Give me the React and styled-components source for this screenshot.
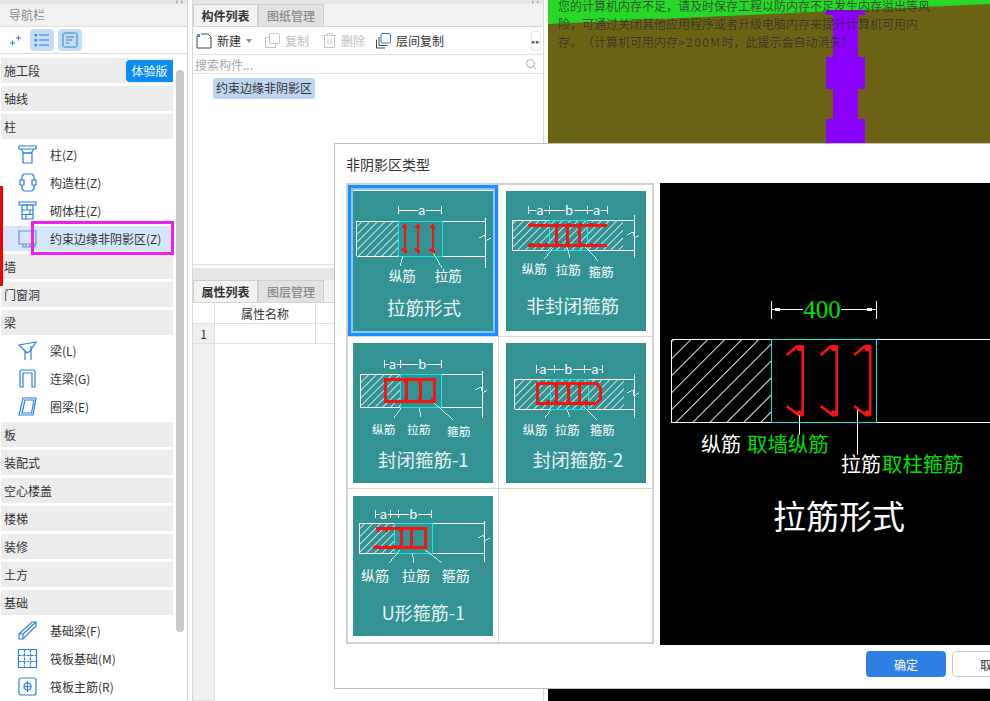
import React from 'react'
import styled, { createGlobalStyle } from 'styled-components'
import { Search } from 'lucide-react'

const FONT = '"Noto Sans CJK SC", "Noto Sans", sans-serif'
const BLUE = '#2a7de1'

const Global = createGlobalStyle`
html, body { margin:0; padding:0; background:#fff; }
* { box-sizing:border-box; }
`

const Page = styled.div`
position:relative;
width:990px;
height:701px;
overflow:hidden;
display:flex;
background:#fff;
font-family:${FONT};
font-size:12px;
color:#333;
text-spacing-trim:space-all;
`

/* ---------- left nav ---------- */
const Sidebar = styled.div`
position:relative;
width:188px;
flex:none;
margin-right:4px;
border-right:1px solid #d8d8d8;
display:flex;
flex-direction:column;
`
const RedMark = styled.div`
position:absolute;
left:0;
top:186px;
width:3px;
height:100px;
background:#f00000;
`
const TopStrip = styled.div`
height:4px;
background:#e6e6e6;
flex:none;
display:flex;
justify-content:flex-end;
padding-right:3px;
`
const NavTitle = styled.div`
height:22px;
line-height:21px;
padding-left:9px;
background:#f1f1f1;
color:#8a8a8a;
flex:none;
`
const NavTools = styled.div`
height:28px;
flex:none;
display:flex;
align-items:center;
gap:4px;
padding-left:4px;
border-top:1px solid #e0e0e0;
border-bottom:1px solid #dcdcdc;
`
const ToolSlot = styled.div`
height:22px;
display:flex;
align-items:center;
justify-content:center;
border-radius:4px;
background:${p => (p.$on ? '#c5dcf3' : 'transparent')};
width:${p => (p.$on ? '24px' : '22px')};
`
const NavBody = styled.div`
flex:1;
display:flex;
min-height:0;
`
const NavList = styled.div`
width:174px;
padding:4px 1px 0 1px;
display:flex;
flex-direction:column;
gap:3px;
`
const ScrollTrack = styled.div`
flex:1;
padding:16px 3px 0 2px;
`
const ScrollThumb = styled.div`
height:562px;
width:8px;
background:#c9c9c9;
border-radius:4px;
`
const Section = styled.div`
height:25px;
flex:none;
display:flex;
align-items:center;
justify-content:space-between;
padding-left:3px;
background:#ececec;
`
const TrialBadge = styled.div`
width:47px;
height:22px;
background:#0a8cf0;
color:#fff;
border-radius:4px 0 0 4px;
display:flex;
align-items:center;
justify-content:center;
`
const Item = styled.div`
position:relative;
height:25px;
flex:none;
display:flex;
align-items:center;
padding-left:16px;
gap:12px;
background:${p => (p.$active ? '#d3e6fb' : 'transparent')};
`
const ItemIcon = styled.svg`
width:21px;
height:21px;
flex:none;
fill:none;
stroke:${BLUE};
stroke-width:1.2;
`
const MagentaBox = styled.div`
position:absolute;
left:30px;
top:-5px;
width:143px;
height:34px;
border:3px solid #f01ff0;
`

/* ---------- middle panel ---------- */
const Middle = styled.div`
width:352px;
flex:none;
margin-right:4px;
border:solid #d8d8d8;
border-width:0 1px;
display:flex;
flex-direction:column;
`
const TabBar = styled.div`
height:23px;
flex:none;
display:flex;
background:#f2f2f2;
border-bottom:1px solid #d4d4d4;
`
const Tab = styled.div`
width:${p => (p.$on ? '65px' : '66px')};
border:1px solid #cfcfcf;
border-bottom:0;
display:flex;
align-items:center;
justify-content:center;
font-weight:${p => (p.$on ? 700 : 500)};
background:${p => (p.$on ? '#f2f2f2' : '#e2e2e2')};
color:${p => (p.$on ? '#333' : '#8a8a8a')};
`
const ListPane = styled.div`
height:238px;
flex:none;
display:flex;
flex-direction:column;
border-bottom:1px solid #e0e0e0;
`
const Toolbar = styled.div`
height:28px;
flex:none;
display:flex;
align-items:center;
padding-left:3px;
border-bottom:1px solid #e4e4e4;
`
const ToolBtn = styled.div`
display:flex;
align-items:center;
gap:5px;
margin-right:${p => p.$gap || 14}px;
color:${p => (p.$off ? '#bdbdbd' : '#333')};
`
const Caret = styled.span`
width:0;
height:0;
border:3px solid transparent;
border-top:4px solid #8a8a8a;
border-bottom:0;
margin:0 13px 0 -9px;
`
const MoreBtn = styled.div`
margin-left:auto;
margin-right:2px;
width:10px;
height:20px;
border:1px solid #e6e6e6;
border-radius:3px;
color:#555;
font-size:7px;
display:flex;
align-items:center;
justify-content:center;
`
const SearchRow = styled.div`
height:19px;
flex:none;
display:flex;
align-items:center;
justify-content:space-between;
padding:0 6px 0 2px;
color:#a8a8a8;
border-bottom:1px solid #e4e4e4;
`
const ListBody = styled.div`
padding:4px 0 0 20px;
`
const ListChip = styled.div`
display:inline-block;
height:21px;
line-height:20px;
padding:0 3px;
border-radius:3px;
background:#bdd7f2;
`
const PaneGap = styled.div`
height:3px;
flex:none;
`
const GrayStrip = styled.div`
height:12px;
flex:none;
background:#e6e6e6;
`
const PropTable = styled.div`
flex:1;
display:grid;
grid-template-columns:22px 101px 1fr;
grid-template-rows:21px 20px 1fr;
`
const HeadCell = styled.div`
display:flex;
align-items:center;
justify-content:center;
border-right:1px solid #e0e0e0;
border-bottom:1px solid #e0e0e0;
background:${p => (p.$gutter ? '#f0f0f0' : '#fff')};
`

/* ---------- canvas ---------- */
const Viewport = styled.div`
position:relative;
flex:1;
background:#000;
`
const CanvasArt = styled.svg`
position:absolute;
inset:0;
width:100%;
height:100%;
`
const MemoryTip = styled.div`
position:absolute;
left:10px;
top:0;
display:flex;
flex-direction:column;
gap:6px;
white-space:nowrap;
color:rgba(45,45,45,.78);
`
const TipLine = styled.div`
line-height:12px;
`
const TipNumber = styled.span`
letter-spacing:1.4px;
`

/* ---------- dialog ---------- */
const Dialog = styled.div`
position:absolute;
left:334px;
top:143px;
width:710px;
height:546px;
background:#fff;
border:1px solid #bdbdbd;
display:flex;
flex-direction:column;
`
const DialogTitle = styled.div`
height:39px;
flex:none;
padding-left:11px;
display:flex;
align-items:center;
font-size:14px;
`
const DialogBody = styled.div`
height:462px;
flex:none;
display:flex;
padding-left:11px;
`
const TypeGrid = styled.div`
width:308px;
height:461px;
flex:none;
border:2px solid #d0d0d0;
display:grid;
grid-template-columns:151px 153px;
grid-template-rows:152px 152px 153px;
`
const TypeCell = styled.div`
display:flex;
align-items:center;
justify-content:center;
border-right:${p => (p.$col === 0 ? '1px solid #d8d8d8' : '0')};
border-bottom:${p => (p.$row < 2 ? '1px solid #d8d8d8' : '0')};
box-shadow:${p => (p.$selected ? 'inset 0 0 0 3px #1890ff, inset 0 0 0 5px #8fc1fb' : 'none')};
`
const Preview = styled.div`
flex:1;
margin-left:6px;
background:#000;
`
const DiagramSvg = styled.svg`
display:block;
font-family:${FONT};
shape-rendering:crispEdges;
`
const DialogFooter = styled.div`
flex:1;
display:flex;
justify-content:flex-end;
gap:6px;
padding:6px 11px 0 0;
`
const Button = styled.div`
width:80px;
height:26px;
border-radius:4px;
display:flex;
align-items:center;
justify-content:center;
background:${p => (p.$primary ? '#2d7fe3' : '#fff')};
color:${p => (p.$primary ? '#fff' : '#333')};
border:${p => (p.$primary ? '0' : '1px solid #c8c8c8')};
`

/* ---------- small icons ---------- */
const icons = {
  column: <><path d="M2 2h17v3H2z" /><path d="M4 5l3 4h7l3-4" /><path d="M6 9h9v10H6z" /></>,
  tie: <path d="M7 2h8l2 2v4h-2v5h2v4l-2 2H7l-2-2v-4h2V8H5V4z M5 8H3v5h2 M17 8h2v5h-2" />,
  brick: <><path d="M2 2h17v3H2z" /><path d="M5 5h11v14H5z" /><path d="M5 10h11M5 14.500h11M10 5v5M13 10v4.500M9 14.500v4.500" /></>,
  edge: <g stroke="#6d93bf"><path d="M2 3h17v13H2z" /><path d="M6 16v3h12v-3M9 19v-3M13 19v-3" /></g>,
  beam: <><path d="M2 5l17-3-6 9-3 2z" /><path d="M8 11v9M14 6v14" /></>,
  link: <path d="M3 19V4q0-2 2-2h11q2 0 2 2v15h-3V5H6v14z" />,
  ring: <><path d="M6 2h13l-3 17H2z" /><path d="M8 4h9l-2.500 13H5z" /></>,
  footing: <><path d="M2 14L15 2h4v4L6 19H2z" /><path d="M2 14h4v5M6 14L19 2" /></>,
  raft: <><path d="M1.500 1.500h18v18h-18z" /><path d="M1.500 7.500h18M1.500 13.500h18M7.500 1.500v18M13.500 1.500v18" strokeDasharray="3 1" /></>,
  rebar: <><rect x="2" y="2" width="17" height="17" rx="2" /><path d="M10.500 5v11M7 10.500h7" /><circle cx="10.500" cy="10.500" r="3.500" /></>,
}

const NavItem = ({ icon, label, active, children }) => (
  <Item $active={active}>
    <ItemIcon viewBox="0 0 21 21">{icons[icon]}</ItemIcon>
    <span>{label}</span>
    {children}
  </Item>
)

const nav = [
  { type: 's', label: '轴线' },
  { type: 's', label: '柱' },
  { icon: 'column', label: '柱(Z)' },
  { icon: 'tie', label: '构造柱(Z)' },
  { icon: 'brick', label: '砌体柱(Z)' },
  { icon: 'edge', label: '约束边缘非阴影区(Z)', active: true },
  { type: 's', label: '墙' },
  { type: 's', label: '门窗洞' },
  { type: 's', label: '梁' },
  { icon: 'beam', label: '梁(L)' },
  { icon: 'link', label: '连梁(G)' },
  { icon: 'ring', label: '圈梁(E)' },
  { type: 's', label: '板' },
  { type: 's', label: '装配式' },
  { type: 's', label: '空心楼盖' },
  { type: 's', label: '楼梯' },
  { type: 's', label: '装修' },
  { type: 's', label: '土方' },
  { type: 's', label: '基础' },
  { icon: 'footing', label: '基础梁(F)' },
  { icon: 'raft', label: '筏板基础(M)' },
  { icon: 'rebar', label: '筏板主筋(R)' },
]

/* ---------- rebar diagrams ---------- */
const WHITE = '#fff'
const CYAN = '#19e6e6'
const RED = '#f51414'

const row = (xs, y) => xs.map(x => [x, y])

const types = [
  {
    title: '拉筋形式', titleX: 71, titleY: 117, titleSize: 18.500,
    dimY: 19, ticks: [45.300, 88], dimText: [['a', 68.700]],
    wall: [3.700, 30.300, 41.600, 35], hatchW: 41.600, lineEnd: 132.700, vy: [27, 77], breakY: 47,
    cyan: [45.300, 30.300, 44, 35],
    rebar: ['M49 37l3-3v27l-3-3', 'M62 37l3-3v27l-3-3', 'M77 37l3-3v27l-3-3'], barW: 2,
    dots: [...row([51, 64, 79], 35), ...row([51, 64, 79], 59)],
    leaders: [[50, 65, 47, 75], [80.300, 61.700, 88.700, 76.700]],
    labels: [['纵筋', 49.300, 85], ['拉筋', 95.300, 85]], labelSize: 13.500,
  },
  {
    title: '非封闭箍筋', titleX: 66.700, titleY: 114.500, titleSize: 18.600,
    dimY: 19, ticks: [22.300, 43.300, 81.300, 101.700], dimText: [['a', 34], ['b', 63], ['a', 90.700]],
    wall: [6.300, 29.300, 111, 30], hatchW: 111, lineEnd: 128.300, vy: [24, 66.700], breakY: 44,
    cyan: [43.300, 29.300, 38, 30],
    rebar: ['M22 34h79', 'M22 54h79', 'M50 34v20', 'M61.300 34v20', 'M73 34v20'], barW: 3,
    dots: [...row([24, 50, 61, 73, 84], 32), ...row([24, 31, 39, 50, 61, 73, 84], 52)],
    leaders: [[47.300, 56.700, 38, 68.300], [61.300, 56.700, 64, 66.700], [79, 55.700, 92.300, 70]],
    labels: [['纵筋', 28.300, 78], ['拉筋', 62.300, 79], ['箍筋', 95, 81]], labelSize: 12.500,
  },
  {
    title: '封闭箍筋-1', titleX: 70.300, titleY: 117, titleSize: 18.500,
    dimY: 21, ticks: [31.300, 47.300, 88], dimText: [['a', 39.300], ['b', 69.300]],
    wall: [7.300, 31.300, 40, 33], hatchW: 40, lineEnd: 129.300, vy: [28, 74.700], breakY: 47,
    cyan: [47.300, 31.300, 41.400, 33],
    rebar: ['M32 36.300h49.300v22.400H32z', 'M53.700 36.300v22.400', 'M67 36.300v22.400'], barW: 3,
    dots: [...row([51, 65], 37), ...row([51, 65, 78], 55)],
    leaders: [[48, 65.300, 41, 74.700], [66, 65.300, 68, 73.700], [81.300, 60.300, 100.300, 77]],
    labels: [['纵筋', 30.700, 87], ['拉筋', 65.700, 87], ['箍筋', 105.700, 88.500]], labelSize: 11.700,
  },
  {
    title: '封闭箍筋-2', titleX: 72, titleY: 117, titleSize: 18.500,
    dimY: 26.300, ticks: [30.300, 48, 78, 96.300], dimText: [['a', 37], ['b', 62.300], ['a', 89]],
    wall: [8.700, 36.300, 109.300, 29.700], hatchW: 109.300, lineEnd: 128, vy: [31, 74.700], breakY: 50,
    cyan: [44.700, 36.300, 37.300, 29.700],
    rebar: ['M31.300 40.300h59l3.700 4v12l-3.700 4h-59z', 'M50.300 40.300v20', 'M62 40.300v20', 'M73.700 40.300v20'], barW: 3,
    dots: [...row([48, 60, 72], 41), ...row([41, 48, 60, 72, 79], 57)],
    leaders: [[44.700, 67, 39, 74.700], [61.300, 67, 63.700, 74.300], [78, 63.700, 91.300, 77]],
    labels: [['纵筋', 29, 87], ['拉筋', 61.300, 87], ['箍筋', 96.300, 87]], labelSize: 12.300,
  },
  {
    title: 'U形箍筋-1', titleX: 70.300, titleY: 117, titleSize: 18,
    dimY: 18.300, ticks: [22, 37, 45.300, 78.700], dimText: [['a', 30.300], ['b', 60.300]],
    wall: [6.300, 27.300, 35, 30], hatchW: 35, lineEnd: 131.700, vy: [25, 66.300], breakY: 42,
    cyan: [41.300, 27.300, 38, 30],
    rebar: ['M22.700 32.300H72v19.400H20.300', 'M48 32.300v19.400', 'M58.700 32.300v19.400'], barW: 3,
    dots: [...row([24, 32, 46, 57], 33), ...row([22, 32, 40, 46, 57], 49)],
    leaders: [[47, 54, 36.300, 66.700], [59.300, 57.300, 61, 66.700], [72, 54, 88.700, 66.700]],
    labels: [['纵筋', 22, 80], ['拉筋', 63, 80], ['箍筋', 102.700, 80]], labelSize: 14,
  },
]

const TypeDiagram = ({ t, id }) => {
  const [wx, wy, , wh] = t.wall
  const [cx, cy, cw, ch] = t.cyan
  return (
    <DiagramSvg width="140" height="140" viewBox="0 0 140 140">
      <defs>
        <pattern id={id} width="5.500" height="5.500" patternUnits="userSpaceOnUse" patternTransform="rotate(45)">
          <line x1="0" y1="0" x2="0" y2="5.500" stroke="#fff" strokeWidth="0.800" />
        </pattern>
      </defs>
      <rect width="140" height="140" fill="#339393" />
      <rect x={wx} y={wy} width={t.hatchW} height={wh} fill={`url(#${id})`} />
      <path d={`M${wx} ${wy}H${t.lineEnd}M${wx} ${wy + wh}H${t.lineEnd}M${wx} ${wy}v${wh}M${t.lineEnd} ${t.vy[0]}V${t.vy[1]}`} stroke={WHITE} fill="none" />
      <path d={`M${t.lineEnd - 7} ${t.breakY}l6 -3 1 6 5 -3`} stroke={WHITE} fill="none" strokeWidth="0.800" />
      <rect x={cx} y={cy} width={cw} height={ch} fill="none" stroke={CYAN} />
      <line x1={t.ticks[0]} y1={t.dimY} x2={t.ticks[t.ticks.length - 1]} y2={t.dimY} stroke={WHITE} />
      {t.ticks.map(x => <line key={x} x1={x} y1={t.dimY - 4} x2={x} y2={t.dimY + 4} stroke={WHITE} />)}
      {t.dimText.map(([s, x]) => (
        <text key={x} x={x} y={t.dimY + 4.500} textAnchor="middle" fontSize="13" fill={WHITE} stroke="#339393" strokeWidth="3" paintOrder="stroke">{s}</text>
      ))}
      {t.rebar.map(d => <path key={d} d={d} fill="none" stroke={RED} strokeWidth={t.barW} />)}
      {t.dots.map(([x, y]) => <rect key={`${x}-${y}`} x={x} y={y} width="3" height="3" fill={RED} />)}
      {t.leaders.map(l => <line key={l.join()} x1={l[0]} y1={l[1]} x2={l[2]} y2={l[3]} stroke={WHITE} strokeWidth="0.800" />)}
      {t.labels.map(([s, x, y]) => (
        <text key={s} x={x} y={y + t.labelSize * 0.38} textAnchor="middle" fontSize={t.labelSize} fill={WHITE}>{s}</text>
      ))}
      <text x={t.titleX} y={t.titleY + t.titleSize * 0.38} textAnchor="middle" fontSize={t.titleSize} fill="#e8f4f4">{t.title}</text>
    </DiagramSvg>
  )
}

const BigPreview = () => (
  <DiagramSvg width="372" height="462" viewBox="0 0 372 462">
    <defs>
      <pattern id="bigHatch" width="12" height="12" patternUnits="userSpaceOnUse" patternTransform="rotate(45)">
        <line x1="0" y1="0" x2="0" y2="12" stroke="#fff" strokeWidth="0.900" />
      </pattern>
    </defs>
    <path d="M111.500 118v18M216.500 118v18M111.500 126.500h31M181 126.500h35.500" stroke="#fff" fill="none" />
    <rect x="115" y="125" width="5" height="3" fill="#fff" />
    <rect x="207" y="125" width="5" height="3" fill="#fff" />
    <text x="162" y="135" textAnchor="middle" fontSize="25" fill="#00e000" fontFamily="'Liberation Serif', serif">400</text>
    <rect x="11.500" y="156.500" width="100" height="83" fill="url(#bigHatch)" />
    <path d="M11.500 156.500H372M11.500 239.500H372M11.500 156.500V239.500" stroke="#fff" fill="none" />
    <rect x="111.500" y="156.500" width="105" height="83" fill="none" stroke={CYAN} />
    {[0, 34, 67.500].map(dx => (
      <g key={dx} transform={`translate(${dx} 0)`} fill="none" stroke={RED} strokeWidth="2.600">
        <path d="M126.700 172l10-8.500h6V231.500h-5l-11-8.500" shapeRendering="auto" />
        <circle cx="140" cy="165" r="2" fill={RED} shapeRendering="auto" />
        <circle cx="140" cy="230.500" r="2" fill={RED} shapeRendering="auto" />
      </g>
    ))}
    <path d="M139.500 232v20M197.500 227v45" stroke="#fff" fill="none" />
    <text x="41" y="269" fontSize="20" fill="#fff">纵筋</text>
    <text x="87" y="269" fontSize="20.400" fill="#00e000">取墙纵筋</text>
    <text x="181" y="289" fontSize="20" fill="#fff">拉筋</text>
    <text x="222" y="289" fontSize="20.400" fill="#00e000">取柱箍筋</text>
    <text x="179" y="346" textAnchor="middle" fontSize="33" fill="#fff">拉筋形式</text>
  </DiagramSvg>
)

const GripMark = () => (
  <svg width="8" height="4" viewBox="0 0 8 4" fill="#a8a8a8"><path d="M0 0l2 2-2 2zM5 0l2 2-2 2z" /></svg>
)

const App = () => (
  <Page>
    <Global />
    <Sidebar>
      <TopStrip><GripMark /></TopStrip>
      <NavTitle>导航栏</NavTitle>
      <NavTools>
        <ToolSlot>
          <svg width="14" height="14" viewBox="0 0 14 14" stroke={BLUE} fill="none"><path d="M2 10h5M4.500 7.500v5M8 5h5M10.500 2.500v5" /></svg>
        </ToolSlot>
        <ToolSlot $on>
          <svg width="16" height="14" viewBox="0 0 16 14" stroke={BLUE} fill="none"><path d="M5 2h10M5 7h10M5 12h10" /><path d="M1 1.500h1.500v1.500H1zM1 6.500h1.500V8H1zM1 11.500h1.500V13H1z" /></svg>
        </ToolSlot>
        <ToolSlot $on>
          <svg width="16" height="16" viewBox="0 0 16 16" stroke={BLUE} fill="none"><rect x="1" y="1" width="14" height="14" rx="1.500" /><path d="M4 5h8M4 8h6M4 11h3" /></svg>
        </ToolSlot>
      </NavTools>
      <NavBody>
        <NavList>
          <Section>施工段<TrialBadge>体验版</TrialBadge></Section>
          {nav.map(n => (n.type === 's'
            ? <Section key={n.label}>{n.label}</Section>
            : (
              <NavItem key={n.label} icon={n.icon} label={n.label} active={n.active}>
                {n.active && <MagentaBox />}
              </NavItem>
            )))}
        </NavList>
        <ScrollTrack><ScrollThumb /></ScrollTrack>
      </NavBody>
      <RedMark />
    </Sidebar>

    <Middle>
      <TopStrip><GripMark /></TopStrip>
      <TabBar><Tab $on>构件列表</Tab><Tab>图纸管理</Tab></TabBar>
      <ListPane>
        <Toolbar>
          <ToolBtn $gap={14}>
            <svg width="16" height="16" viewBox="0 0 16 16" fill="none" stroke="#444"><path d="M1 3v12h14V4l-3-3H5" /><path d="M1 1h3v3H1z" fill="#4a90e2" stroke="none" /></svg>
            新建
          </ToolBtn>
          <Caret />
          <ToolBtn $off $gap={14}>
            <svg width="15" height="15" viewBox="0 0 15 15" fill="none" stroke="#c4c4c4"><rect x="4.500" y="0.500" width="10" height="10" rx="1" /><path d="M4.500 4.500h-4v10h10v-4" /></svg>
            复制
          </ToolBtn>
          <ToolBtn $off $gap={11}>
            <svg width="13" height="15" viewBox="0 0 13 15" fill="none" stroke="#c4c4c4"><path d="M0 2.500h13M4 2.500V.5h5v2M1.500 2.500v12h10v-12M5 5.500v6M8 5.500v6" /></svg>
            删除
          </ToolBtn>
          <ToolBtn>
            <svg width="15" height="16" viewBox="0 0 15 16" fill="none"><rect x="5" y="0.500" width="9.500" height="9.500" rx="1" stroke="#2a7de1" /><path d="M3 4v8.500h8.500M0.500 6.500v8.500h8.500" stroke="#444" /></svg>
            层间复制
          </ToolBtn>
          <MoreBtn>▸▸</MoreBtn>
        </Toolbar>
        <SearchRow>搜索构件...<Search size={12} color="#a8a8a8" /></SearchRow>
        <ListBody><ListChip>约束边缘非阴影区</ListChip></ListBody>
      </ListPane>
      <PaneGap />
      <GrayStrip />
      <TabBar><Tab $on>属性列表</Tab><Tab>图层管理</Tab></TabBar>
      <PropTable>
        <HeadCell />
        <HeadCell>属性名称</HeadCell>
        <HeadCell />
        <HeadCell $gutter>1</HeadCell>
        <HeadCell />
        <HeadCell />
        <HeadCell $gutter />
      </PropTable>
    </Middle>

    <Viewport>
      <CanvasArt viewBox="0 0 442 701" preserveAspectRatio="none">
        <rect width="442" height="143" fill="#6b6415" />
        <path d="M0 0H442V4L0 24z" fill="#28d828" />
        <path d="M278 10h39v5h-7v42h7v32h-7v30h7v24h-39v-24h7V89h-7V57h7V15h-7z" fill="#8c00ff" />
      </CanvasArt>
      <MemoryTip>
        <TipLine>您的计算机内存不足，请及时保存工程以防内存不足发生内存溢出等风</TipLine>
        <TipLine>险，可通过关闭其他应用程序或者升级电脑内存来提升计算机可用内</TipLine>
        <TipLine>存。（计算机可用内存<TipNumber>&gt;200M</TipNumber>时，此提示会自动消失）</TipLine>
      </MemoryTip>
    </Viewport>

    <Dialog>
      <DialogTitle>非阴影区类型</DialogTitle>
      <DialogBody>
        <TypeGrid>
          {types.map((t, i) => (
            <TypeCell key={t.title} $selected={i === 0} $col={i % 2} $row={Math.floor(i / 2)}>
              <TypeDiagram t={t} id={`hatch${i}`} />
            </TypeCell>
          ))}
          <TypeCell $col={1} $row={2} />
        </TypeGrid>
        <Preview><BigPreview /></Preview>
      </DialogBody>
      <DialogFooter>
        <Button $primary>确定</Button>
        <Button>取消</Button>
      </DialogFooter>
    </Dialog>
  </Page>
)

export default App
